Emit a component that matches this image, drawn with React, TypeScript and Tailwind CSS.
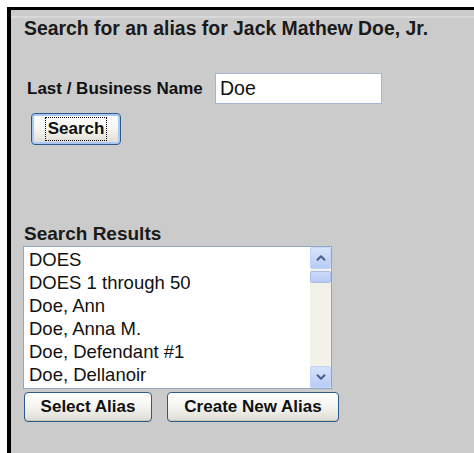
import { ChevronUp, ChevronDown } from 'lucide-react';

const results = [
  'DOES',
  'DOES 1 through 50',
  'Doe, Ann',
  'Doe, Anna M.',
  'Doe, Defendant #1',
  'Doe, Dellanoir',
];

function XpButton({ label, width, focused }: { label: string; width: string; focused?: boolean }) {
  return (
    <button
      className={`${width} rounded-[4px] border border-[#2c5a8c] bg-gradient-to-b from-white via-[#f4f4f0] to-[#dedcd2] text-[17px] font-bold text-[#111] flex items-center justify-center ${
        focused ? 'h-[32px] shadow-[inset_0_0_0_2px_#a9c8f5]' : 'h-[30px] shadow-[inset_0_-1px_0_#c9c6b8]'
      }`}
    >
      {focused ? (
        <span className="border border-dotted border-black px-[2px] leading-[22px]">{label}</span>
      ) : (
        label
      )}
    </button>
  );
}

export default function App() {
  return (
    <div className="w-[474px] h-[453px] bg-white pt-[7px] pl-[7px] font-['Liberation_Sans',Arial,sans-serif] overflow-hidden">
      <div className="h-full border-t-[3px] border-l-[4px] border-black bg-[#cbcbcb] flex flex-col">
        <div className="h-[2px] mt-[6px] bg-[#d8d8d8]" />

        <h1 className="ml-[13px] text-[19.4px] font-bold text-[#1a1a1a] leading-[20px] whitespace-nowrap">
          Search for an alias for Jack Mathew Doe, Jr.
        </h1>

        <div className="flex items-center ml-[16px] mt-[35px] h-[31px]">
          <label className="text-[17px] font-bold text-[#111] w-[188px] whitespace-nowrap">Last / Business Name</label>
          <div className="w-[167px] h-[31px] bg-white border border-[#a3b6cf] flex items-center px-[4px] text-[19.5px] text-[#111]">
            Doe
          </div>
        </div>

        <div className="ml-[20px] mt-[9px]">
          <XpButton label="Search" width="w-[90px]" focused />
        </div>

        <div className="ml-[13px] mt-[78px] text-[19px] font-bold text-[#1a1a1a] leading-[22px]">Search Results</div>

        <div className="ml-[12px] mt-[1px] w-[309px] h-[143px] bg-white border border-[#8ea7c6] flex">
          <ul className="flex-1 pl-[5px] pt-[2px] text-[18.5px] text-[#111] leading-[22.9px]">
            {results.map((r) => (
              <li key={r} className="whitespace-nowrap">{r}</li>
            ))}
          </ul>
          {/* XP-style scrollbar */}
          <div className="w-[21px] bg-[#f2f1ea] flex flex-col">
            <div className="h-[22px] rounded-[2px] bg-gradient-to-b from-[#d9e4fb] to-[#b6cbf6] border border-[#c4d5f8] flex items-center justify-center">
              <ChevronUp size={14} strokeWidth={3.5} className="text-[#4d6185]" />
            </div>
            <div className="mt-[2px] h-[12px] rounded-[2px] bg-gradient-to-b from-[#cdd9f9] to-[#b6cbf6] border border-[#a9bde6]" />
            <div className="flex-1" />
            <div className="h-[22px] rounded-[2px] bg-gradient-to-b from-[#d9e4fb] to-[#b6cbf6] border border-[#c4d5f8] flex items-center justify-center">
              <ChevronDown size={14} strokeWidth={3.5} className="text-[#4d6185]" />
            </div>
          </div>
        </div>

        <div className="flex gap-[15px] ml-[13px] mt-[3px]">
          <XpButton label="Select Alias" width="w-[128px]" />
          <XpButton label="Create New Alias" width="w-[172px]" />
        </div>
      </div>
    </div>
  );
}
